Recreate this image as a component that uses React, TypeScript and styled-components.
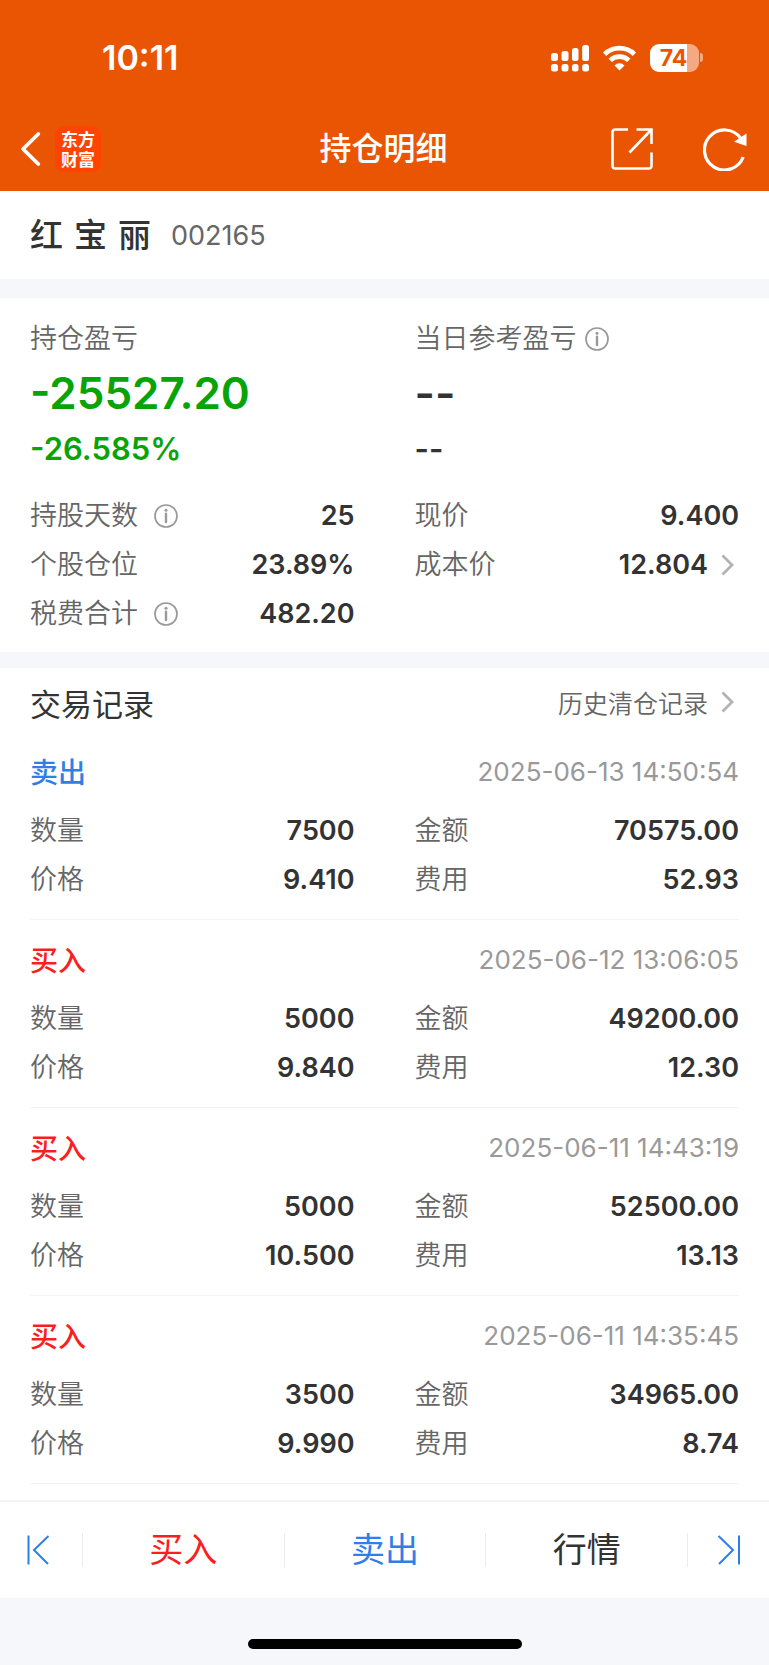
import React from "react";
import styled, { createGlobalStyle } from "styled-components";

const color = {
  brand: "#ea5504",
  ink: "#333333",
  label: "#666666",
  muted: "#999999",
  band: "#f6f7fa",
  line: "#f3f4f6",
  buy: "#fa1e1e",
  sell: "#2e7fe8",
  loss: "#07a307",
};

const GlobalStyle = createGlobalStyle`
  *, *::before, *::after { box-sizing: border-box; }
  body {
    margin: 0;
    background: ${color.band};
    color: ${color.ink};
    font-family: Inter, "Noto Sans CJK SC", sans-serif;
    font-size: 27px;
  }
  h1, h2, h3, p, dl, dd, ul { margin: 0; padding: 0; }
  button { margin: 0; padding: 0; border: 0; background: none; font: inherit; color: inherit; cursor: pointer; }
  a { color: inherit; text-decoration: none; }
  svg { display: block; flex: none; }
`;

const Page = styled.div`
  display: flex;
  flex-direction: column;
  min-height: 100vh;
`;

const Header = styled.header`
  background: ${color.brand};
  color: #fff;
  padding-bottom: 8px;
`;

const StatusBar = styled.div`
  display: flex;
  align-items: center;
  justify-content: space-between;
  height: 115px;
  padding: 0 66px 0 102px;
`;

const Clock = styled.time`
  font-size: 34px;
  font-weight: 600;
`;

const StatusIcons = styled.div`
  display: flex;
  align-items: center;
  gap: 14px;
`;

const Battery = styled.div`
  display: flex;
  align-items: center;
  gap: 1px;
`;

const BatteryCell = styled.span`
  display: flex;
  align-items: center;
  justify-content: center;
  width: 49px;
  height: 28px;
  padding-right: 2px;
  border-radius: 9px;
  background: linear-gradient(to right, #fff 75%, #f5a981 75%);
  color: ${color.brand};
  font-size: 23px;
  font-weight: 700;
`;

const BatteryTip = styled.span`
  width: 3px;
  height: 9px;
  border-radius: 0 4px 4px 0;
  background: #f5a981;
`;

const NavBar = styled.nav`
  display: grid;
  grid-template-columns: 1fr auto 1fr;
  align-items: center;
  height: 68px;
  padding: 0 22px 0 20px;
`;

const NavGroup = styled.div<{ $end?: boolean }>`
  display: flex;
  align-items: center;
  justify-content: ${(p) => (p.$end ? "flex-end" : "flex-start")};
  gap: ${(p) => (p.$end ? 50 : 14)}px;
`;

const AppBadge = styled.span`
  display: grid;
  place-content: center;
  width: 46px;
  height: 46px;
  border-radius: 9px;
  background: #ff4300;
  font-family: "Noto Sans CJK SC", sans-serif;
  font-size: 17px;
  font-weight: 700;
  line-height: 20px;
  text-align: center;
`;

const Title = styled.h1`
  font-size: 32px;
  font-weight: 500;
  line-height: 48px;
`;

const StockRow = styled.section`
  display: flex;
  align-items: center;
  gap: 20px;
  height: 88px;
  padding: 0 30px;
  background: #fff;
`;

const StockName = styled.h2`
  display: flex;
  gap: 11px;
  font-size: 33px;
  font-weight: 500;
  line-height: 48px;
`;

const StockCode = styled.span`
  color: ${color.label};
  font-size: 27px;
`;

const Summary = styled.section`
  margin-top: 19px;
  padding: 16px 30px 14px;
  background: #fff;
`;

const Columns = styled.div`
  display: grid;
  grid-template-columns: 1fr 1fr;
  column-gap: 60px;
`;

const FieldLabel = styled.div<{ $gap?: number }>`
  display: flex;
  align-items: center;
  gap: ${(p) => p.$gap ?? 16}px;
  color: ${color.label};
  font-size: 27px;
  font-weight: 350;
  line-height: 50px;
`;

const Profit = styled.p<{ $loss?: boolean }>`
  color: ${(p) => (p.$loss ? color.loss : color.ink)};
  font-size: 44px;
  font-weight: 600;
  line-height: 58px;
`;

const ProfitRate = styled(Profit)`
  font-size: 31px;
  line-height: 54px;
`;

const Stats = styled(Columns)`
  margin-top: 15px;
`;

const DataList = styled.dl`
  min-width: 0;
`;

const DataRow = styled.div`
  display: flex;
  align-items: center;
  justify-content: space-between;
  height: 49px;
`;

const DataValue = styled.dd`
  font-size: 27px;
  font-weight: 600;
`;

const ArrowLink = styled.a`
  display: flex;
  align-items: center;
  gap: 12px;
`;

const Records = styled.section`
  margin-top: 16px;
  padding: 6px 30px 16px;
  background: #fff;
`;

const RecordsHead = styled.div`
  display: flex;
  align-items: center;
  justify-content: space-between;
  height: 56px;
  margin-bottom: 2px;
  color: ${color.label};
  font-size: 25px;
  font-weight: 350;
`;

const RecordsTitle = styled.h2`
  color: ${color.ink};
  font-size: 31px;
  font-weight: 400;
`;

const RecordList = styled.ul`
  list-style: none;
`;

const Record = styled.li`
  padding: 11px 0 15px;
  border-bottom: 1px solid ${color.line};
`;

const RecordHead = styled.div`
  display: flex;
  align-items: center;
  justify-content: space-between;
  height: 56px;
  margin-bottom: 7px;
`;

const Side = styled.h3<{ $side: "buy" | "sell" }>`
  color: ${(p) => color[p.$side]};
  font-size: 28px;
  font-weight: 500;
`;

const RecordTime = styled.time`
  color: ${color.muted};
  font-size: 26px;
`;

const ActionBar = styled.nav`
  display: grid;
  grid-template-columns: 82px 1fr 1fr 1fr 82px;
  align-items: center;
  height: 98px;
  border-top: 2px solid ${color.line};
  background: #fff;
`;

const Action = styled.button<{ $tone: string }>`
  display: flex;
  align-items: center;
  justify-content: center;
  height: 34px;
  color: ${(p) => p.$tone};
  font-size: 34px;
  line-height: 34px;

  &:first-child {
    padding-right: 6px;
  }

  & + & {
    border-left: 1px solid #ececee;
  }
`;

const HomeArea = styled.footer`
  display: flex;
  flex: 1;
  align-items: flex-end;
  justify-content: center;
  min-height: 66px;
  padding-bottom: 16px;
`;

const HomeIndicator = styled.span`
  width: 274px;
  height: 10px;
  border-radius: 5px;
  background: #000;
`;

const SignalIcon = () => (
  <svg width="38" height="28" viewBox="0 0 38 28" fill="#fff" aria-hidden="true">
    <rect x="0" y="9" width="7" height="8" rx="2.5" />
    <rect x="10.5" y="7" width="7" height="10" rx="2.5" />
    <rect x="21" y="4" width="6.5" height="13" rx="2.5" />
    <rect x="31.2" y="1" width="6.8" height="16" rx="2.5" />
    <rect x="0" y="20" width="7" height="7.5" rx="2.5" />
    <rect x="10.5" y="20" width="7" height="7.5" rx="2.5" />
    <rect x="21" y="20" width="6.5" height="7.5" rx="2.5" />
    <rect x="31.2" y="20" width="6.8" height="7.5" rx="2.5" />
  </svg>
);

const WifiIcon = () => (
  <svg width="33" height="26" viewBox="0 0 33 26" fill="none" stroke="#fff" strokeWidth="4.8" aria-hidden="true">
    <path d="M1.6 9.2a21.3 21.3 0 0 1 29.8 0" />
    <path d="M7.2 15.4a13.3 13.3 0 0 1 18.6 0" />
    <path d="M16.5 25.5l-5-5.1a7 7 0 0 1 10 0z" fill="#fff" stroke="none" />
  </svg>
);

const BackIcon = () => (
  <svg width="21" height="36" viewBox="0 0 21 36" fill="none" stroke="#fff" strokeWidth="3.8" strokeLinecap="round" strokeLinejoin="round" aria-hidden="true">
    <path d="M18.3 3 3 18l15.3 15" />
  </svg>
);

const ShareIcon = () => (
  <svg width="42" height="42" viewBox="0 0 42 42" fill="none" stroke="#fff" strokeWidth="2.6" aria-hidden="true">
    <path d="M17 1.5H4A2.5 2.5 0 0 0 1.5 4v34A2.5 2.5 0 0 0 4 40.5h34a2.5 2.5 0 0 0 2.5-2.5V24.5" />
    <path d="M25.5 1.5h15V16M40 2 18.5 24.5" />
  </svg>
);

const RefreshIcon = () => (
  <svg width="44" height="44" viewBox="0 0 44 44" fill="none" stroke="#fff" strokeWidth="3.2" aria-hidden="true">
    <path d="M40.2 30A20 20 0 1 1 37.5 11" />
    <path d="M43.5 6.500v12.500L31 14.800z" fill="#fff" stroke="none" />
  </svg>
);

const InfoIcon = () => (
  <svg width="24" height="24" viewBox="0 0 24 24" fill="none" stroke="#999" strokeWidth="1.7" aria-hidden="true">
    <circle cx="12" cy="12" r="11" />
    <path d="M12 9.8V18" strokeWidth="2.4" strokeLinecap="round" />
    <circle cx="12" cy="6.3" r="1.5" fill="#999" stroke="none" />
  </svg>
);

const ArrowIcon = () => (
  <svg width="19" height="22" viewBox="0 0 19 22" fill="none" stroke="#b3b3b3" strokeWidth="2.8" aria-hidden="true">
    <path d="M2.5 1.5 12 11l-9.5 9.5" />
  </svg>
);

const EdgeIcon = ({ flip }: { flip?: boolean }) => (
  <svg width="24" height="30" viewBox="0 0 24 30" fill="none" stroke={color.sell} strokeWidth="2" aria-hidden="true">
    {flip ? <path d="M1.500 1 16 15 2 29M22 .5v29" /> : <path d="M22.500 1 8 15l14 14M2.500.5v29" />}
  </svg>
);

const InfoButton = ({ topic }: { topic: string }) => (
  <button type="button" aria-label={topic + "说明"}>
    <InfoIcon />
  </button>
);

type Field = { label: string; value: string; info?: boolean; href?: string };

const Fields = ({ items }: { items: Field[] }) => (
  <DataList>
    {items.map((item) => (
      <DataRow key={item.label}>
        <FieldLabel as="dt">
          {item.label}
          {item.info && <InfoButton topic={item.label} />}
        </FieldLabel>
        <DataValue>
          {item.href ? (
            <ArrowLink href={item.href}>
              {item.value}
              <ArrowIcon />
            </ArrowLink>
          ) : (
            item.value
          )}
        </DataValue>
      </DataRow>
    ))}
  </DataList>
);

const trades: { side: "buy" | "sell"; time: string; qty: string; price: string; amount: string; fee: string }[] = [
  { side: "sell", time: "2025-06-13 14:50:54", qty: "7500", price: "9.410", amount: "70575.00", fee: "52.93" },
  { side: "buy", time: "2025-06-12 13:06:05", qty: "5000", price: "9.840", amount: "49200.00", fee: "12.30" },
  { side: "buy", time: "2025-06-11 14:43:19", qty: "5000", price: "10.500", amount: "52500.00", fee: "13.13" },
  { side: "buy", time: "2025-06-11 14:35:45", qty: "3500", price: "9.990", amount: "34965.00", fee: "8.74" },
];

export default function App() {
  return (
    <Page lang="zh-CN">
      <GlobalStyle />
      <Header>
        <StatusBar>
          <Clock>10:11</Clock>
          <StatusIcons>
            <SignalIcon />
            <WifiIcon />
            <Battery>
              <BatteryCell>74</BatteryCell>
              <BatteryTip />
            </Battery>
          </StatusIcons>
        </StatusBar>
        <NavBar>
          <NavGroup>
            <button type="button" aria-label="返回">
              <BackIcon />
            </button>
            <AppBadge>
              <span>东方</span>
              <span>财富</span>
            </AppBadge>
          </NavGroup>
          <Title>持仓明细</Title>
          <NavGroup $end>
            <button type="button" aria-label="分享">
              <ShareIcon />
            </button>
            <button type="button" aria-label="刷新">
              <RefreshIcon />
            </button>
          </NavGroup>
        </NavBar>
      </Header>

      <main>
        <StockRow>
          <StockName>
            <span>红 </span>
            <span>宝 </span>
            <span>丽</span>
          </StockName>
          <StockCode>002165</StockCode>
        </StockRow>

        <Summary>
          <Columns>
            <div>
              <FieldLabel>持仓盈亏</FieldLabel>
              <Profit $loss>-25527.20</Profit>
              <ProfitRate $loss>-26.585%</ProfitRate>
            </div>
            <div>
              <FieldLabel $gap={8}>
                当日参考盈亏
                <InfoButton topic="当日参考盈亏" />
              </FieldLabel>
              <Profit>--</Profit>
              <ProfitRate>--</ProfitRate>
            </div>
          </Columns>
          <Stats>
            <Fields
              items={[
                { label: "持股天数", value: "25", info: true },
                { label: "个股仓位", value: "23.89%" },
                { label: "税费合计", value: "482.20", info: true },
              ]}
            />
            <Fields
              items={[
                { label: "现价", value: "9.400" },
                { label: "成本价", value: "12.804", href: "#cost" },
              ]}
            />
          </Stats>
        </Summary>

        <Records>
          <RecordsHead>
            <RecordsTitle>交易记录</RecordsTitle>
            <ArrowLink href="#history">
              历史清仓记录
              <ArrowIcon />
            </ArrowLink>
          </RecordsHead>
          <RecordList>
            {trades.map((t) => (
              <Record key={t.time}>
                <RecordHead>
                  <Side $side={t.side}>{t.side === "buy" ? "买入" : "卖出"}</Side>
                  <RecordTime>{t.time}</RecordTime>
                </RecordHead>
                <Columns>
                  <Fields
                    items={[
                      { label: "数量", value: t.qty },
                      { label: "价格", value: t.price },
                    ]}
                  />
                  <Fields
                    items={[
                      { label: "金额", value: t.amount },
                      { label: "费用", value: t.fee },
                    ]}
                  />
                </Columns>
              </Record>
            ))}
          </RecordList>
        </Records>
      </main>

      <ActionBar>
        <Action type="button" $tone={color.sell} aria-label="上一只">
          <EdgeIcon />
        </Action>
        <Action type="button" $tone={color.buy}>买入</Action>
        <Action type="button" $tone={color.sell}>卖出</Action>
        <Action type="button" $tone={color.ink}>行情</Action>
        <Action type="button" $tone={color.sell} aria-label="下一只">
          <EdgeIcon flip />
        </Action>
      </ActionBar>
      <HomeArea>
        <HomeIndicator />
      </HomeArea>
    </Page>
  );
}
